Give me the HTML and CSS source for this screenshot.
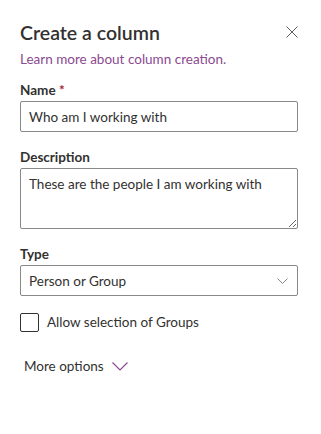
FILE: index.html
```html
<!DOCTYPE html>
<html lang="en">

<head>
    <meta charset="UTF-8">
    <meta name="viewport" content="width=device-width, initial-scale=1.0">
    <title>Create a column</title>
    <link rel="stylesheet" href="styles.css">
</head>

<body>
    <div class="panel">
        <div class="header">
            <div class="title">Create a column</div>
            <div class="close">
                <svg width="12" height="12" viewBox="0 0 12 12">
                    <path d="M0.5 0.5 L11.5 11.5 M11.5 0.5 L0.5 11.5" stroke="#605e5c" stroke-width="1" fill="none" />
                </svg>
            </div>
        </div>
        <a class="learn" href="#">Learn more about column creation.</a>

        <div class="field first">
            <label class="label">Name <span class="required">*</span></label>
            <input class="input" type="text" value="Who am I working with">
        </div>

        <div class="field">
            <label class="label">Description</label>
            <textarea class="textarea">These are the people I am working with</textarea>
        </div>

        <div class="field">
            <label class="label">Type</label>
            <div class="select">
                <span>Person or Group</span>
                <svg width="11" height="6" viewBox="0 0 11 6">
                    <path d="M0.5 0.5 L5.5 5.5 L10.5 0.5" stroke="#8a8886" stroke-width="1" fill="none" />
                </svg>
            </div>
        </div>

        <label class="checkbox">
            <span class="box"></span>
            <span>Allow selection of Groups</span>
        </label>

        <div class="more">
            <span>More options</span>
            <svg width="16" height="9" viewBox="0 0 16 9">
                <path d="M0.5 0.5 L8 8 L15.5 0.5" stroke="#8b4a90" stroke-width="1.2" fill="none" />
            </svg>
        </div>
    </div>
</body>

</html>
```

FILE: styles.css
```css
:root {
    --text-color: #323130;
    --border-color: #8a8886;
    --icon-color: #605e5c;
    --link-color: #8b4a90;
    --error-color: #a4262c;
}

body * {
    font-family: "Lato", "Open Sans", sans-serif;
    box-sizing: border-box;
}

body {
    margin: 0;
    background: #ffffff;
    color: var(--text-color);
}

.panel {
    display: flex;
    flex-direction: column;
    padding: 19px 23px 0 20px;
}

.header {
    display: flex;
    justify-content: space-between;
    align-items: flex-start;
}

.title {
    font-size: 19.5px;
    line-height: 28px;
    font-weight: 600;
}

.close {
    display: flex;
    padding-top: 7px;
}

.learn {
    margin-top: 2px;
    font-size: 13.5px;
    line-height: 20px;
    color: var(--link-color);
    text-decoration: none;
}

.field {
    display: flex;
    flex-direction: column;
    margin-top: 15px;
}

.field.first {
    margin-top: 11px;
}

.label {
    font-size: 13.5px;
    line-height: 20px;
    font-weight: 700;
    margin-bottom: 1px;
}

.required {
    color: var(--error-color);
}

.input,
.select {
    height: 31px;
    border: 1px solid var(--border-color);
    border-radius: 2px;
    padding: 0 8px;
    font-size: 13.5px;
    color: var(--text-color);
    background: #ffffff;
    outline: none;
}

.textarea {
    height: 61px;
    border: 1px solid var(--border-color);
    border-radius: 2px;
    padding: 5px 8px;
    font-size: 13.5px;
    line-height: 20px;
    color: var(--text-color);
    resize: vertical;
    outline: none;
}

.select {
    display: flex;
    align-items: center;
    justify-content: space-between;
    padding-right: 9px;
}

.checkbox {
    display: flex;
    align-items: center;
    gap: 8px;
    margin-top: 16px;
    font-size: 13.5px;
    line-height: 20px;
}

.box {
    width: 19px;
    height: 19px;
    border: 1px solid var(--text-color);
    border-radius: 2px;
}

.more {
    display: flex;
    align-items: center;
    gap: 8px;
    margin-top: 24px;
    padding-left: 4px;
    font-size: 13.5px;
    line-height: 20px;
}
```
